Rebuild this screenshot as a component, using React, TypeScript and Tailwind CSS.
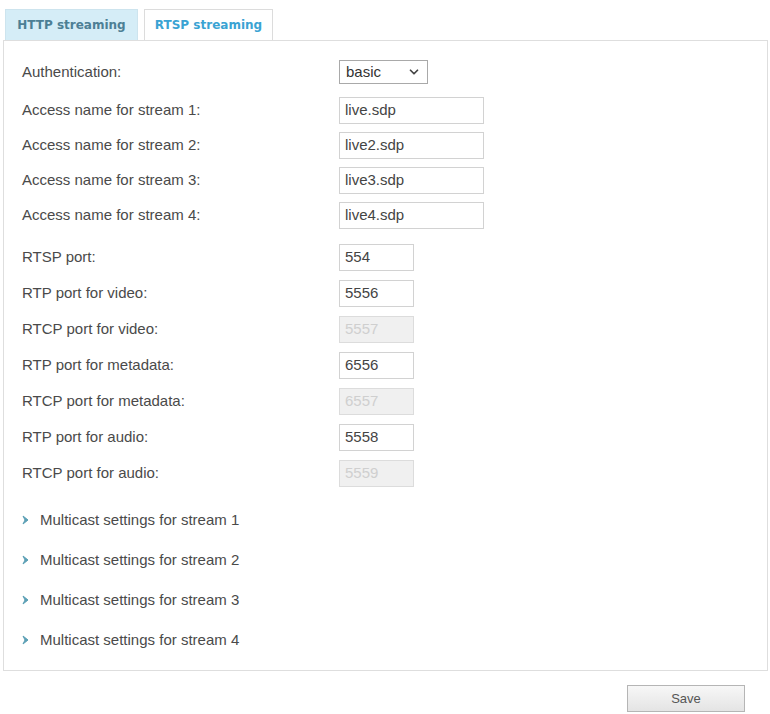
import { ChevronDown } from "lucide-react";

const accessNames = ["live.sdp", "live2.sdp", "live3.sdp", "live4.sdp"];

const ports = [
  { label: "RTSP port:", value: "554", disabled: false },
  { label: "RTP port for video:", value: "5556", disabled: false },
  { label: "RTCP port for video:", value: "5557", disabled: true },
  { label: "RTP port for metadata:", value: "6556", disabled: false },
  { label: "RTCP port for metadata:", value: "6557", disabled: true },
  { label: "RTP port for audio:", value: "5558", disabled: false },
  { label: "RTCP port for audio:", value: "5559", disabled: true },
];

function Arrow() {
  return (
    <svg width="8" height="10" viewBox="0 0 8 10" className="shrink-0">
      <path d="M1 1 L6 5 L1 9 L3 5 Z" fill="#5b9fb5" stroke="#5b9fb5" strokeWidth="1" strokeLinejoin="round" />
    </svg>
  );
}

export default function App() {
  return (
    <div className="w-[770px] h-[714px] bg-white font-['Liberation_Sans',Arial,sans-serif] text-[15px] text-[#4a4a4a] overflow-hidden">
      {/* Tabs */}
      <div className="flex gap-[6px] pl-[5px] pt-[9px]">
        <div className="w-[133px] h-[31px] flex items-center justify-center bg-[#d5edf7] border border-[#cde4ee] border-b-0 font-['DejaVu_Sans',Verdana,sans-serif] font-bold text-[12px] text-[#4d7f95]">
          HTTP streaming
        </div>
        <div className="w-[129px] h-[31px] flex items-center justify-center bg-white border border-[#dcdcdc] border-b-0 font-['DejaVu_Sans',Verdana,sans-serif] font-bold text-[12px] text-[#3aa3d3]">
          RTSP streaming
        </div>
      </div>

      {/* Panel */}
      <div className="ml-[3px] w-[765px] border border-[#dedede] pl-[18px] pt-[19px] pb-[20px]">
        <div className="flex items-center h-[24px]">
          <span className="w-[317px]">Authentication:</span>
          <div className="w-[89px] h-[24px] border border-[#a9a9a9] flex items-center justify-between pl-[6px] pr-[6px] text-[#333]">
            <span>basic</span>
            <ChevronDown size={14} strokeWidth={3} className="text-[#444]" />
          </div>
        </div>

        <div className="mt-[13px] flex flex-col gap-[8px]">
          {accessNames.map((name, i) => (
            <div key={name} className="flex items-center h-[27px]">
              <span className="w-[317px]">Access name for stream {i + 1}:</span>
              <div className="w-[145px] h-[27px] border border-[#d2d2d2] flex items-center pl-[5px] text-[#444]">
                {name}
              </div>
            </div>
          ))}
        </div>

        <div className="mt-[15px] flex flex-col gap-[9px]">
          {ports.map((p) => (
            <div key={p.label} className="flex items-center h-[27px]">
              <span className="w-[317px]">{p.label}</span>
              <div
                className={`w-[75px] h-[27px] border flex items-center pl-[5px] ${
                  p.disabled
                    ? "bg-[#f0f0f0] border-[#dcdcdc] text-[#cfcfcf]"
                    : "bg-white border-[#d2d2d2] text-[#444]"
                }`}
              >
                {p.value}
              </div>
            </div>
          ))}
        </div>

        <div className="mt-[23px] flex flex-col gap-[20px]">
          {[1, 2, 3, 4].map((n) => (
            <div key={n} className="flex items-center gap-[10px] h-[20px]">
              <Arrow />
              <span>Multicast settings for stream {n}</span>
            </div>
          ))}
        </div>
      </div>

      <div className="flex justify-end pr-[25px] mt-[14px]">
        <button className="w-[118px] h-[27px] border border-[#b5b5b5] bg-gradient-to-b from-[#f7f7f7] to-[#e4e4e4] text-[13px] text-[#555]">
          Save
        </button>
      </div>
    </div>
  );
}
